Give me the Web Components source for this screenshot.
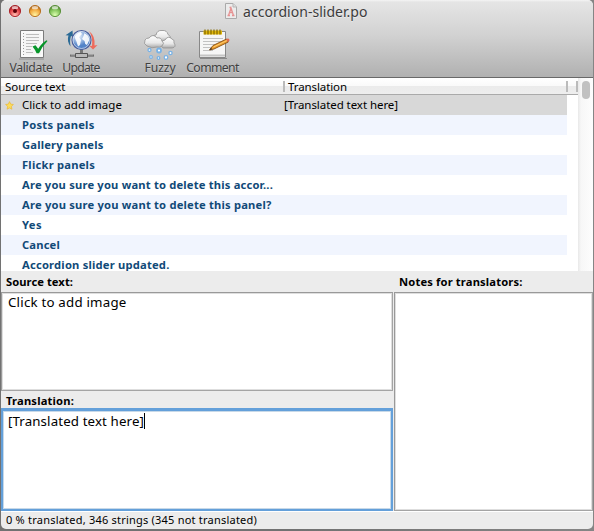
<!DOCTYPE html>
<html lang="en"><head><meta charset="utf-8"><title>accordion-slider.po</title>
<style>html,body{margin:0;height:531px;overflow:hidden;background:#777}</style></head>
<body><po-window></po-window>
<script>
const define=(name,html,init)=>customElements.define(name,class extends HTMLElement{
  constructor(){super();this.attachShadow({mode:'open'}).innerHTML=html;}
  connectedCallback(){if(init)init(this,this.shadowRoot);}
});

// Text run that tracks its letters to fill the given width
define('fit-text',`<style>:host{display:block;white-space:pre}span{display:inline-block}</style><span><slot></slot></span>`,(el,r)=>{
  const s=r.querySelector('span'),n=el.textContent.length,w=+el.getAttribute('width');
  s.style.letterSpacing=((w-s.getBoundingClientRect().width)/n).toFixed(3)+'px';
});

define('tool-button',`<style>:host{display:flex;flex-direction:column;align-items:center;color:#404040;font-size:12.2px;line-height:16px}
::slotted(svg){display:block;width:34px;height:32px}.l{text-shadow:0 1px 0 #ffffff60}</style><slot name="icon"></slot><div class="l"><slot></slot></div>`);

define('traffic-light',`<style>:host{display:block;width:12px;height:12px}svg{display:block;overflow:visible}</style><svg width="12" height="12"></svg>`,(el,r)=>{
  const [a,b,c]=el.getAttribute('tones').split(' ');
  r.querySelector('svg').innerHTML=`<defs><radialGradient id="g" cx=".5" cy=".85" r=".75"><stop offset="0" stop-color="${c}"/><stop offset=".65" stop-color="${b}"/><stop offset="1" stop-color="${a}"/></radialGradient></defs><circle cx="6" cy="6.4" r="6.1" fill="#fff" opacity=".5"/><circle cx="6" cy="6" r="5.6" fill="url(#g)" stroke="${a}" stroke-width=".9"/><ellipse cx="6" cy="2.7" rx="3.2" ry="1.6" fill="#fff" opacity=".65"/>${el.hasAttribute('dot')?'<circle cx="6" cy="6" r="2" fill="#5c0008"/>':''}`;
});

define('po-toolbar',`<style>
:host{display:block;box-sizing:border-box;height:78px;background:linear-gradient(#f4f4f4 0,#e5e5e5 2px,#d2d2d2 35px,#b1b1b1 76px);border-bottom:1px solid #686868;border-radius:5px 5px 0 0}
.title{display:grid;grid-template-columns:225px 1fr;height:25px}
.lights{display:flex;gap:8px;padding:5px 0 0 8px}
.name{display:flex;align-items:flex-start;gap:6px;color:#3c3c3c;font-size:14px;line-height:18px;padding-top:3px;text-shadow:0 1px 0 #ffffff70}
.name svg{margin-left:-1px;display:block}
.tools{display:grid;grid-template-columns:54px 46px 29px 54px 51px;padding:3px 0 0 3px}
</style>
<div class="title"><div class="lights"><traffic-light dot tones="#a51c23 #e8484c #ffc0b4"></traffic-light><traffic-light tones="#b26a19 #f2a83d #fff4a0"></traffic-light><traffic-light tones="#548b32 #82c35a #dcffb0"></traffic-light></div>
<div class="name"><svg width="12" height="16" viewBox="0 0 12 16"><path d="M.5.5h7.5l3.5 3.5v11.5H.5z" fill="#ececec" stroke="#aaa"/><path d="M8 .5V4h3.5" fill="#ddd" stroke="#b5b5b5"/><path d="M2.500 12.500h2.500M7 12.500h2.500M3.500 12.500L6 5l2.500 7.500M4.500 9.500h3M4.500 4.500h2" fill="none" stroke="#e69292" stroke-width="1.3"/></svg><fit-text width="124.5">accordion-slider.po</fit-text></div></div>
<div class="tools">
<tool-button><svg slot="icon" viewBox="0 0 34 32"><path d="M5 30.500h25v1H5z" fill="#666" opacity=".5"/><path d="M6.500 2.500h23v27h-23z" fill="#f5f5f5" stroke="#7b7b7b"/><path d="M8 4h20v24H8z" fill="none" stroke="#fff"/><path d="M12 6.500h13M12 9.500h13M12 12.500h13M12 15.500h11M12 18.500h6M12 21.500h5M12 24.500h7" stroke="#bdbdbd"/><path d="M9.500 5v22" stroke="#999" stroke-dasharray="1 2"/><path d="M18.500 18.500l3-1.300 2.700 3.500q4-6 8.300-8.400l1 .7q-5 5-8.500 12.200h-2.400q-1.800-4-4.100-6.700z" fill="#07952a"/></svg><fit-text width="43">Validate</fit-text></tool-button>
<tool-button><svg slot="icon" viewBox="0 0 34 32"><defs><radialGradient id="e" cx=".35" cy=".3"><stop stop-color="#e9f2fc"/><stop offset=".5" stop-color="#a5c0e6"/><stop offset="1" stop-color="#5484c8"/></radialGradient></defs><path d="M6.500 18.500Q2.500 13 4.500 7.500L1.500 7.200 8.500 2.500l.5 6.500-2-1Q5.500 12 6.500 18.500z" fill="#2c6b96"/><path d="M25 3q6.500 5 5.500 14.500l3-.5-4.500 4.500-4-4 3 .5Q29 9 25 3z" fill="#ee6b5c"/><path d="M17.500 21v5" stroke="#777" stroke-width="3"/><path d="M6 27.500h24" stroke="#555" stroke-width="2"/><path d="M6.500 27h23" stroke="#ccc" stroke-width=".8"/><path d="M11.500 25.500h12v4h-12z" stroke="#555" fill="#bbb"/><circle cx="17.500" cy="12" r="9.500" fill="url(#e)" stroke="#4c5f9c" stroke-width="1.200"/><circle cx="17.500" cy="12" r="8.500" fill="none" stroke="#fff" stroke-width=".7" opacity=".8"/><path d="M10.500 9q2-4 6-5l1.500 2-3 3 2 3-1 5-2 1.500-1.500-5zM20.500 5l4 3 .8 4-2.300 5-1.800-1-.7-3-2.500-2 1.500-3z" fill="#fff" opacity=".9"/></svg><fit-text width="37.500">Update</fit-text></tool-button><span></span>
<tool-button><svg slot="icon" viewBox="0 0 34 32"><defs><linearGradient id="c" x2="0" y2="1"><stop stop-color="#fff"/><stop offset=".6" stop-color="#e8e8e8"/><stop offset="1" stop-color="#a9a9a9"/></linearGradient></defs><g fill="url(#c)" stroke="#999" stroke-width=".9"><path d="M9 13q-1-6 4-6 1-5 6-4.500 5-.5 6 4 4 2 2 7z"/><path d="M20 20q-3-2-1-5 0-3 3-3 3-5 7-1 3 1 2 4 3 4-2 5z"/><path d="M4 18q-4-2-2-6 1-2 4-2 4-5 8 0 4-1 5 3 3 2 0 5-2 2-5 1-5 2-10-1z"/></g><g fill="#fff" stroke="#78b2e6" stroke-width="1.3"><circle cx="6.500" cy="22" r="1.5"/><circle cx="16" cy="22.500" r="2" stroke-width="1.800"/><circle cx="27.500" cy="25" r="1.600"/><circle cx="8" cy="29" r="1.300"/><circle cx="15.500" cy="30" r="1.300"/><circle cx="23" cy="29.500" r="1.800"/></g></svg><fit-text width="31">Fuzzy</fit-text></tool-button>
<tool-button><svg slot="icon" viewBox="0 0 34 32"><path d="M4 30h27v1H4z" fill="#555" opacity=".5"/><path d="M3.500 3.500h26v26h-26z" fill="#f6f6f6" stroke="#888"/><path d="M4 26.500h25v2H4z" fill="#c5c5c5"/><path d="M7 10.500h20M7 13.500h20M7 16.500h17M7 19.500h12M7 22.500h10" stroke="#c2c2c2"/><path d="M7.500 2.500h18.500v4H7.500z" fill="#e2b80a"/><path d="M9 1.500v5M12 1.500v5M15 1.500v5M18 1.500v5M21 1.500v5M24 1.500v5" stroke="#806600" stroke-width="1.200"/><path d="M13.500 22l3.500-4.500 13.500-6.500 1.800 3-14.300 7z" fill="#eb9c2c" stroke="#865019" stroke-width=".9"/><path d="M17.500 19l13.500-6.500" stroke="#ffce74"/><path d="M30 11q3.500-1.500 3.500 1.500l-1.700 1.800z" fill="#e36a50"/><path d="M13.500 22l1.500-2 1 1z" fill="#222"/></svg><fit-text width="52.500">Comment</fit-text></tool-button>
</div>`);

define('list-row',`<style>:host{display:grid;grid-template-columns:21px 262px 1fr;align-items:center;height:20px;line-height:20px;width:566px;color:#114a78;font-weight:700;font-size:11.200px}
:host([striped]){background:#f1f5fe}:host([selected]){background:#d8d8d8;color:#000;font-weight:400;font-size:11.500px;line-height:18px}svg{visibility:hidden;margin-left:4px}:host([selected]) svg{visibility:visible}</style>
<svg width="9" height="9" viewBox="0 0 9 9"><path d="M4.500 .6l1.200 2.500 2.700.4-2 1.900.5 2.800-2.400-1.300-2.400 1.300.5-2.800-2-1.900 2.700-.4z" fill="#fbdc5c" stroke="#eab83a" stroke-width=".7"/></svg><slot></slot>`);

define('catalog-list',`<style>:host{display:grid;grid-template-columns:1fr 15px;height:193px;background:#fff;font-size:11.5px;overflow:hidden}
.h{display:grid;grid-template-columns:283px 283px 10px 1fr;height:17px;box-sizing:border-box;line-height:17px;border-bottom:1px solid #aaa;background:linear-gradient(#fff 0,#fafafa 48%,#ebebeb 52%,#eee)}
.h>*{height:16px}.h fit-text{padding-left:4px}.d{position:relative}.d::before{content:"";position:absolute;width:2px;height:11px;top:3px;left:-1px;background:#bbb}
.main{overflow:hidden}.bar{background:linear-gradient(90deg,#e8e8e8,#f7f7f7 3px,#fdfdfd);padding:3px 0 0 4px}.thumb{width:8px;height:18px;border-radius:4px;background:#c1c1c1}</style>
<div class="main"><div class="h"><fit-text width="60.500">Source text</fit-text><div class="d"><fit-text width="59">Translation</fit-text></div><div class="d"></div><div class="d"></div></div>
<list-row selected><fit-text width="100">Click to add image</fit-text><fit-text width="114">[Translated text here]</fit-text></list-row>
<list-row striped><fit-text width="72.500">Posts panels</fit-text></list-row>
<list-row><fit-text width="81.500">Gallery panels</fit-text></list-row>
<list-row striped><fit-text width="73">Flickr panels</fit-text></list-row>
<list-row><fit-text width="251">Are you sure you want to delete this accor...</fit-text></list-row>
<list-row striped><fit-text width="249.500">Are you sure you want to delete this panel?</fit-text></list-row>
<list-row><fit-text width="20">Yes</fit-text></list-row>
<list-row striped><fit-text width="38">Cancel</fit-text></list-row>
<list-row><fit-text width="147.500">Accordion slider updated.</fit-text></list-row></div>
<div class="bar"><div class="thumb"></div></div>`);

define('text-field',`<style>:host{display:flex;flex-direction:column;min-height:0}.l{flex:none;height:var(--label,21px);line-height:var(--line,22px);padding-left:5px;font-size:11.200px;font-weight:700}
.box{flex:1;display:flex;align-items:flex-start;box-sizing:border-box;border:1px solid #a4a4a4;border-top-color:#999;border-left-color:#999;box-shadow:inset 0 0 0 1px #dedede;background:#fff;padding:1px 6px;font-size:13.300px;line-height:17px}
:host([focused]) .box{border:2px solid #64a0da;border-top:3px solid #64a0da;box-shadow:inset 0 0 0 1px #c8d9e8;padding:2px 5px}</style>
<div class="l"><slot name="label"></slot></div><div class="box"><slot></slot></div>`);

define('text-caret',`<style>:host{display:block;width:1px;height:16px;background:#000}</style>`);

define('po-window',`<style>:host{display:block;box-sizing:border-box;width:594px;height:531px;padding:0 1px;color:#000;font-family:"Noto Sans","Open Sans",sans-serif;background:linear-gradient(90deg,#727272 50%,#858585)}
.w{display:flex;flex-direction:column;height:529px;background:#ececec;border-radius:5px;overflow:hidden}po-toolbar,catalog-list{flex:none}
.edit{display:grid;grid-template-columns:392px 199px;gap:1px;height:240px;flex:none}.left{display:grid;grid-template-rows:120px 120px;min-height:0}
.tr{--label:17px;--line:20px}.status{flex:1;border-top:1px solid #fff;font-size:11px;line-height:15px;padding-left:5px}</style>
<div class="w"><po-toolbar></po-toolbar><catalog-list></catalog-list>
<div class="edit"><div class="left"><text-field><fit-text slot="label" width="67">Source text:</fit-text><fit-text width="118.500">Click to add image</fit-text></text-field>
<text-field class="tr" focused><fit-text slot="label" width="68">Translation:</fit-text><fit-text width="136">[Translated text here]</fit-text><text-caret></text-caret></text-field></div>
<text-field><fit-text slot="label" width="123.500">Notes for translators:</fit-text></text-field></div>
<div class="status"><fit-text width="251">0 % translated, 346 strings (345 not translated)</fit-text></div></div>`);
</script></body></html>
